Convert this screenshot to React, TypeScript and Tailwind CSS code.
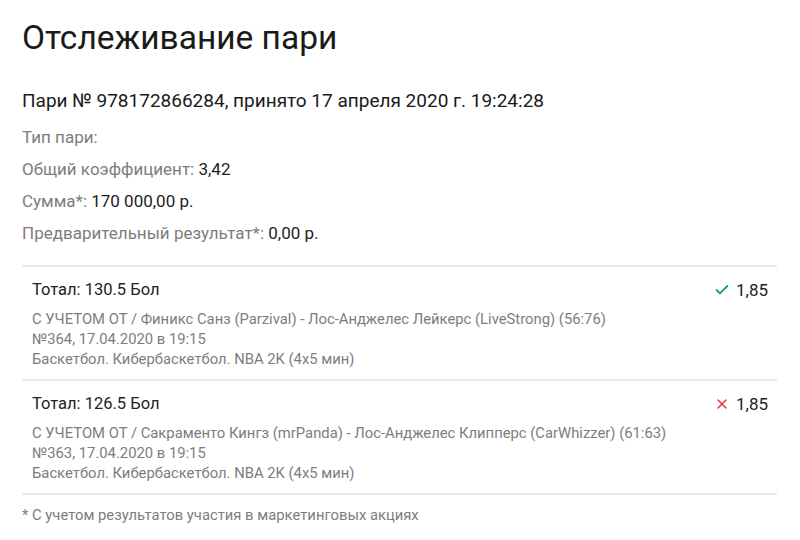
import { Check, X } from 'lucide-react';

type Bet = {
  total: string;
  odds: string;
  won: boolean;
  event: string;
  match: string;
  league: string;
};

const bets: Bet[] = [
  {
    total: 'Тотал: 130.5 Бол',
    odds: '1,85',
    won: true,
    event: 'С УЧЕТОМ ОТ / Финикс Санз (Parzival) - Лос-Анджелес Лейкерс (LiveStrong) (56:76)',
    match: '№364, 17.04.2020 в 19:15',
    league: 'Баскетбол. Кибербаскетбол. NBA 2K (4x5 мин)',
  },
  {
    total: 'Тотал: 126.5 Бол',
    odds: '1,85',
    won: false,
    event: 'С УЧЕТОМ ОТ / Сакраменто Кингз (mrPanda) - Лос-Анджелес Клипперс (CarWhizzer) (61:63)',
    match: '№363, 17.04.2020 в 19:15',
    league: 'Баскетбол. Кибербаскетбол. NBA 2K (4x5 мин)',
  },
];

function InfoRow({ label, value }: { label: string; value?: string }) {
  return (
    <div className="text-[17px] leading-[32px] text-[#7d7d7d]">
      {label}
      {value && <span className="text-[#222]"> {value}</span>}
    </div>
  );
}

function BetRow({ bet }: { bet: Bet }) {
  return (
    <div className="border-t-2 border-[#ebebeb] pl-[10px] pr-[9px] pt-[11px] pb-[10px]">
      <div className="flex items-center justify-between text-[16.5px] leading-[24px] text-[#222]">
        <span>{bet.total}</span>
        <span className="flex items-center gap-[6px]">
          {bet.won ? (
            <Check size={16} strokeWidth={2.75} className="text-[#15a06e]" />
          ) : (
            <X size={16} strokeWidth={2} className="text-[#f0283c]" />
          )}
          <span className="text-[17px]">{bet.odds}</span>
        </span>
      </div>
      <div className="mt-[7px] text-[14.8px] leading-[20px] text-[#7d7d7d]">
        <div>{bet.event}</div>
        <div>{bet.match}</div>
        <div>{bet.league}</div>
      </div>
    </div>
  );
}

export default function App() {
  return (
    <div className="w-[800px] h-[540px] bg-white px-[22px] pt-[18px] font-['Roboto',sans-serif]">
      <h1 className="text-[33.5px] leading-[40px] text-[#1a1a1a]">Отслеживание пари</h1>
      <div className="mt-[31px] text-[19px] leading-[24px] text-[#1a1a1a]">
        Пари № 978172866284, принято 17 апреля 2020 г. 19:24:28
      </div>
      <div className="mt-[8px]">
        <InfoRow label="Тип пари:" />
        <InfoRow label="Общий коэффициент:" value="3,42" />
        <InfoRow label="Сумма*:" value="170 000,00 р." />
        <InfoRow label="Предварительный результат*:" value="0,00 р." />
      </div>
      <div className="mt-[16px] w-[755px]">
        {bets.map((bet) => (
          <BetRow key={bet.match} bet={bet} />
        ))}
        <div className="border-t-2 border-[#ebebeb]" />
      </div>
      <div className="mt-[10px] text-[14.8px] leading-[20px] text-[#7d7d7d]">
        * С учетом результатов участия в маркетинговых акциях
      </div>
    </div>
  );
}
